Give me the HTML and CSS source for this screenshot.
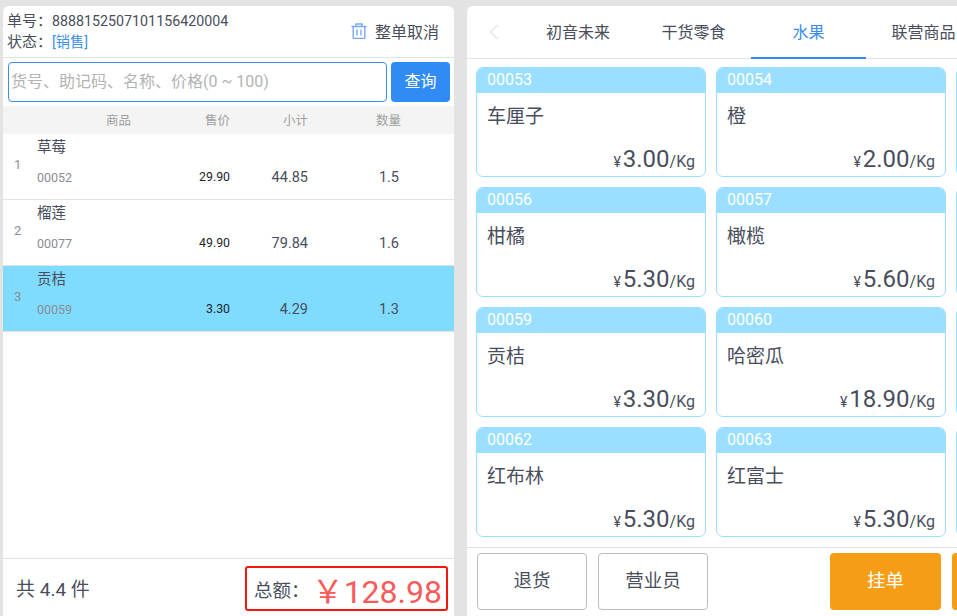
FILE: index.html
```html
<!DOCTYPE html>
<html lang="zh">
<head>
<meta charset="utf-8">
<title>收银台</title>
<link rel="stylesheet" href="styles.css">
</head>
<body>
<div class="page">
  <section class="left">
    <header class="order">
      <div class="order-info">
        <div class="order-line">单号：<span class="order-no">8888152507101156420004</span></div>
        <div class="order-line">状态：<span class="order-state">[销售]</span></div>
      </div>
      <div class="cancel">
        <svg class="trash" width="16" height="16" viewBox="0 0 16 16" fill="none" stroke="#7ba7f2" stroke-width="1.4"><path d="M.5 3.500h15M5 3.500V1h6v2.500M2.200 3.500v10.700a1.300 1.300 0 0 0 1.300 1.300h9a1.300 1.300 0 0 0 1.300-1.300V3.500M6 6.500v6M10 6.500v6"/></svg>
        <span>整单取消</span>
      </div>
    </header>
    <div class="search">
      <div class="search-input">货号、助记码、名称、价格(0 ~ 100)</div>
      <div class="search-btn">查询</div>
    </div>
    <div class="thead">
      <span class="c-name">商品</span><span class="c-price">售价</span><span class="c-sub">小计</span><span class="c-qty">数量</span>
    </div>
    <div class="rows">
      <div class="row">
        <span class="c-idx">1</span>
        <div class="c-good"><div class="g-name">草莓</div><div class="g-code">00052</div></div>
        <span class="v-price">29.90</span><span class="v-sub">44.85</span><span class="v-qty">1.5</span>
      </div>
      <div class="row">
        <span class="c-idx">2</span>
        <div class="c-good"><div class="g-name">榴莲</div><div class="g-code">00077</div></div>
        <span class="v-price">49.90</span><span class="v-sub">79.84</span><span class="v-qty">1.6</span>
      </div>
      <div class="row selected">
        <span class="c-idx">3</span>
        <div class="c-good"><div class="g-name">贡桔</div><div class="g-code">00059</div></div>
        <span class="v-price">3.30</span><span class="v-sub">4.29</span><span class="v-qty">1.3</span>
      </div>
    </div>
    <footer class="summary">
      <div class="count">共 4.4 件</div>
      <div class="total"><span class="total-label">总额：</span><span class="total-value">￥128.98</span></div>
    </footer>
  </section>
  <section class="right">
    <nav class="tabs">
      <svg class="back" width="12" height="16" viewBox="0 0 12 16" fill="none" stroke="#e4e6ea" stroke-width="1.3"><path d="M10 .7 2.500 8l7.500 7.300"/></svg>
      <span class="tab t1">初音未来</span>
      <span class="tab t2">干货零食</span>
      <span class="tab t3 active">水果</span>
      <span class="tab t4">联营商品</span>
    </nav>
    <div class="grid">
      <article class="card"><div class="code">00053</div><div class="name">车厘子</div><div class="price"><i>¥</i><b>3.00</b>/Kg</div></article>
      <article class="card"><div class="code">00054</div><div class="name">橙</div><div class="price"><i>¥</i><b>2.00</b>/Kg</div></article>
      <article class="card"><div class="code"></div></article>
      <article class="card"><div class="code">00056</div><div class="name">柑橘</div><div class="price"><i>¥</i><b>5.30</b>/Kg</div></article>
      <article class="card"><div class="code">00057</div><div class="name">橄榄</div><div class="price"><i>¥</i><b>5.60</b>/Kg</div></article>
      <article class="card"><div class="code"></div></article>
      <article class="card"><div class="code">00059</div><div class="name">贡桔</div><div class="price"><i>¥</i><b>3.30</b>/Kg</div></article>
      <article class="card"><div class="code">00060</div><div class="name">哈密瓜</div><div class="price"><i>¥</i><b>18.90</b>/Kg</div></article>
      <article class="card"><div class="code"></div></article>
      <article class="card"><div class="code">00062</div><div class="name">红布林</div><div class="price"><i>¥</i><b>5.30</b>/Kg</div></article>
      <article class="card"><div class="code">00063</div><div class="name">红富士</div><div class="price"><i>¥</i><b>5.30</b>/Kg</div></article>
      <article class="card"><div class="code"></div></article>
    </div>
    <div class="actions">
      <div class="btn">退货</div>
      <div class="btn">营业员</div>
      <div class="btn-orange hold">挂单</div>
      <div class="btn-orange"></div>
    </div>
  </section>
</div>
</body>
</html>
```

FILE: styles.css
```css
* { box-sizing: border-box; }
html, body { margin: 0; height: 100%; overflow: hidden; }
body { background: #e3e3e3; font-family: Roboto, "Noto Sans CJK SC", sans-serif; color: #494e5c; }
.page { display: flex; width: 957px; height: 616px; padding: 6px 0 0 3px; gap: 13px; overflow: hidden; }

.left { flex: 0 0 451px; height: 610px; background: #fff; border-radius: 6px 6px 0 0; display: flex; flex-direction: column; }
.order { height: 52px; flex: none; border-bottom: 1px solid #e3e3e3; padding: 5px 15px 0 4px; display: flex; justify-content: space-between; }
.order-line { font-size: 15px; line-height: 21px; white-space: nowrap; }
.order-no { font-size: 14.25px; }
.order-state { color: #3a8ef0; font-size: 14.25px; }
.cancel { display: flex; align-items: center; gap: 8px; font-size: 16px; height: 39px; }

.search { height: 48px; flex: none; display: flex; gap: 4px; padding: 4px 4px 0 5px; }
.search-input { width: 379px; height: 40px; border: 1px solid #3a8ef0; border-radius: 4px; color: #b3b3b3; font-size: 16px; line-height: 38px; padding-left: 2px; white-space: nowrap; }
.search-btn { width: 59px; height: 40px; background: #318bf4; color: #fff; border-radius: 4px; text-align: center; font-size: 16px; line-height: 40px; }

.thead { height: 28px; flex: none; background: #f4f4f4; font-size: 12.5px; color: #a0a0a0; display: grid; grid-template-columns: 103px 26px 73px 26px 52px 26px 67px 26px; line-height: 30px; }
.thead span { white-space: nowrap; }
.c-name { grid-column: 2; }
.c-price { grid-column: 4; }
.c-sub { grid-column: 6; }
.c-qty { grid-column: 8; }

.rows { flex: 1; min-height: 0; }
.row { height: 66px; border-bottom: 1px solid #e3e3e3; display: flex; align-items: center; }
.row.selected { background: #80dcff; }
.c-idx { width: 34px; padding-left: 11px; font-size: 13px; color: #8b8d93; margin-top: -5px; flex: none; }
.c-good { width: 36px; flex: none; height: 65px; white-space: nowrap; }
.g-name { font-size: 14.5px; line-height: 20px; padding-top: 4px; height: 33px; }
.g-code { font-size: 12.5px; line-height: 16px; color: #8b8d93; margin-top: 3px; }
.v-price { width: 157px; flex: none; text-align: right; font-size: 12.3px; color: #23252b; margin-top: 20px; white-space: nowrap; }
.v-sub { width: 78px; flex: none; text-align: right; font-size: 14.5px; margin-top: 22px; }
.v-qty { width: 91px; flex: none; text-align: right; font-size: 14.5px; margin-top: 22px; }

.summary { height: 58px; flex: none; border-top: 1px solid #e3e3e3; display: flex; justify-content: space-between; align-items: center; padding: 2px 6px 0 13px; }
.count { font-size: 19px; margin-top: -2px; }
.total { width: 203px; height: 45px; border: 2px solid #f5160c; border-radius: 3px; display: flex; align-items: center; justify-content: space-between; padding-left: 7px; padding-right: 4px; white-space: nowrap; }
.total-label { font-size: 18.5px; }
.total-value { font-size: 32px; color: #fa5a5a; margin-left: -4px; }

.right { flex: 0 0 520px; height: 610px; background: #fff; border-radius: 6px 0 0 0; display: flex; flex-direction: column; }
.tabs { height: 53px; flex: none; border-bottom: 1px solid #e3e3e3; display: flex; }
.back { margin: 18px 0 0 21px; flex: none; }
.tab { flex: none; width: 115px; text-align: center; font-size: 16px; line-height: 54px; white-space: nowrap; height: 52px; }
.t1 { margin-left: 20px; width: 116px; }
.active { color: #3a8ef0; border-bottom: 2px solid #318bf4; height: 53px; }

.grid { height: 488px; flex: none; display: grid; grid-template-columns: repeat(3, 230px); grid-auto-rows: 110px; gap: 10px; padding: 8px 0 0 9px; overflow: hidden; }
.card { border: 1px solid #9adfff; border-radius: 7px; overflow: hidden; position: relative; }
.code { height: 26px; margin: -1px -1px 0; background: #9adfff; color: #fff; font-size: 16px; line-height: 26px; padding-left: 11px; }
.name { font-size: 19px; line-height: 26px; padding: 11px 0 0 10px; }
.price { position: absolute; right: 10px; bottom: 2px; font-size: 16px; line-height: 24px; white-space: nowrap; }
.price i { font-style: normal; font-size: 14px; margin-right: 2px; }
.price b { font-weight: 400; font-size: 24px; }

.actions { flex: 1; border-top: 1px solid #e3e3e3; display: flex; padding: 5px 0 0 10px; }
.btn { width: 110px; height: 57px; border: 1px solid #b8bcc8; border-radius: 4px; text-align: center; font-size: 18.5px; line-height: 55px; margin-right: 11px; }
.btn-orange { flex: none; width: 111px; height: 57px; background: #f59d14; border-radius: 4px; color: #fff; text-align: center; font-size: 18.5px; line-height: 57px; }
.hold { margin-left: 111px; margin-right: 11px; }
```
